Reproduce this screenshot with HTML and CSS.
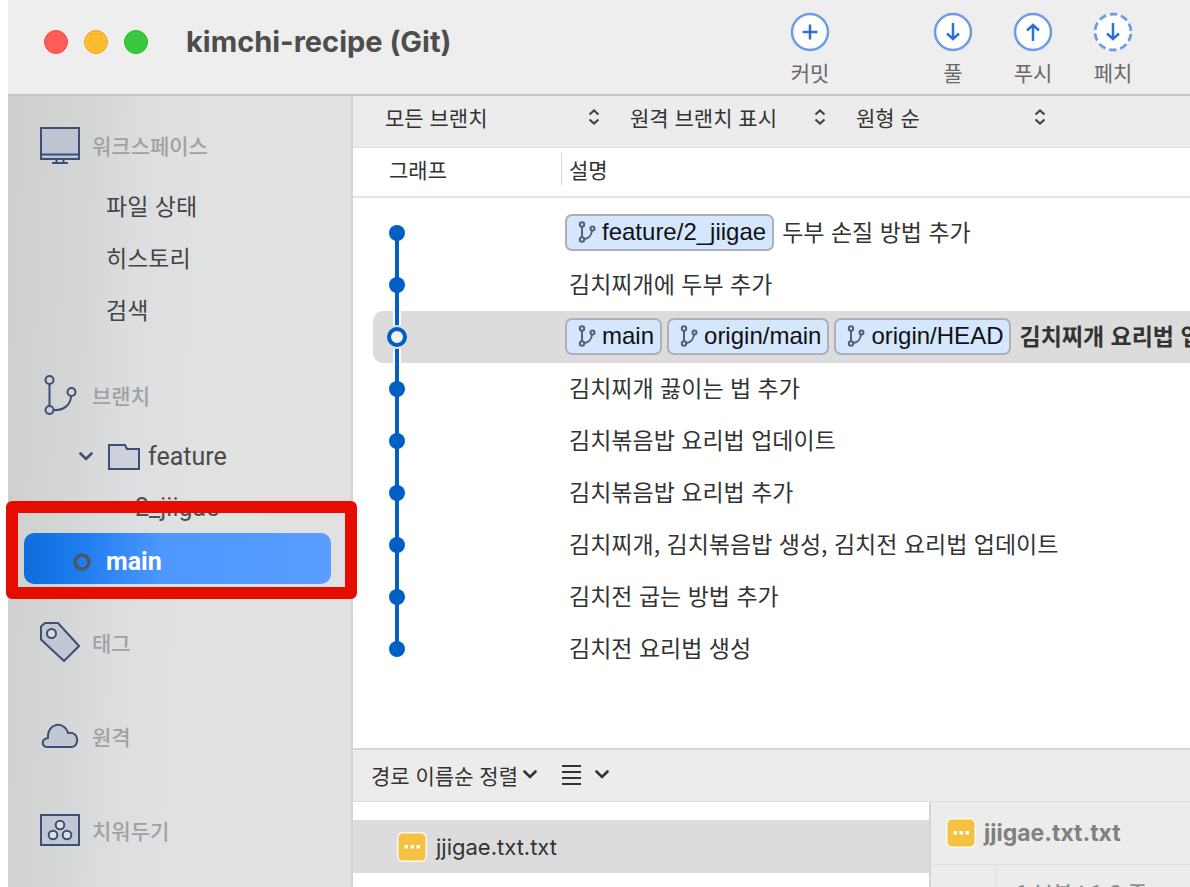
FILE: index.html
```
<!DOCTYPE html>
<html lang="ko">
<head>
<meta charset="utf-8">
<title>kimchi-recipe (Git)</title>
<link rel="stylesheet" href="styles.css">
</head>
<body>
<svg class="defs" aria-hidden="true">
  <symbol id="branch" viewBox="0 0 18 22">
    <g fill="none" stroke="currentColor" stroke-width="2">
      <circle cx="4" cy="3.500" r="2.200"/><circle cx="4" cy="18.500" r="2.200"/><circle cx="14.500" cy="7.500" r="2"/>
      <path d="M4 6v10M6.500 18c4-.5 7-4 7.500-8.500"/>
    </g>
  </symbol>
  <symbol id="updown" viewBox="0 0 12 16">
    <path d="M1.500 5.500 6 1.500l4.500 4M1.500 10.500l4.500 4 4.500-4" fill="none" stroke="#444" stroke-width="2.200"/>
  </symbol>
  <symbol id="chevron" viewBox="0 0 14 9">
    <path d="m1.500 1.500 5.500 5.500 5.500-5.500" fill="none" stroke="currentColor" stroke-width="2.600" stroke-linecap="round"/>
  </symbol>
  <symbol id="modified" viewBox="0 0 32 32">
    <rect x="1" y="1" width="30" height="30" rx="6" fill="#fafafa"/>
    <rect x="2.500" y="2.500" width="27" height="27" rx="4.500" fill="#f6c141"/>
    <path d="M8.500 14h3.500v3.500H8.500zM14.500 14H18v3.500h-3.500zM20.500 14H24v3.500h-3.500z" fill="#fff"/>
  </symbol>
  <symbol id="node" viewBox="0 0 24 52">
    <circle cx="12" cy="26" r="8" fill="#005fc5"/>
  </symbol>
</svg>

<div class="window">
  <header class="titlebar">
    <div class="lights">
      <button class="light close" aria-label="닫기"></button>
      <button class="light minimize" aria-label="최소화"></button>
      <button class="light zoom" aria-label="확대"></button>
    </div>
    <h1 class="title">kimchi-recipe (Git)</h1>
    <div class="actions">
      <button class="action commit">
        <svg width="40" height="40" viewBox="0 0 40 40"><circle cx="20" cy="20" r="18" fill="#fff" stroke="#6f9ce6" stroke-width="2.500"/><path d="M12.500 20h15M20 12.500v15" stroke="#2f70d8" stroke-width="2.500"/></svg>
        <span>커밋</span>
      </button>
      <button class="action">
        <svg width="40" height="40" viewBox="0 0 40 40"><circle cx="20" cy="20" r="18" fill="#fff" stroke="#6f9ce6" stroke-width="2.500"/><path d="M20 11v16M14 21.500l6 5.500 6-5.500" fill="none" stroke="#2f70d8" stroke-width="2.500"/></svg>
        <span>풀</span>
      </button>
      <button class="action">
        <svg width="40" height="40" viewBox="0 0 40 40"><circle cx="20" cy="20" r="18" fill="#fff" stroke="#6f9ce6" stroke-width="2.500"/><path d="M20 29V13M14 18.500l6-5.500 6 5.500" fill="none" stroke="#2f70d8" stroke-width="2.500"/></svg>
        <span>푸시</span>
      </button>
      <button class="action">
        <svg width="40" height="40" viewBox="0 0 40 40"><circle cx="20" cy="20" r="18" fill="#fff" stroke="#6f9ce6" stroke-width="2.800" stroke-dasharray="7.500 3.810" stroke-dashoffset="-1.900"/><path d="M20 11v16M14 21.500l6 5.500 6-5.500" fill="none" stroke="#2f70d8" stroke-width="2.500"/></svg>
        <span>페치</span>
      </button>
    </div>
  </header>

  <div class="body">
    <nav class="sidebar">
      <section class="group">
        <h2 class="group-title">
          <svg class="group-icon" width="40" height="40" viewBox="0 0 40 40"><path d="M1 3h38v31H1z" fill="#bfc4d1" stroke="#3d4f76" stroke-width="2"/><path d="M1 29.500h38M16.500 34v3M23.500 34v3M12 38h16" stroke="#3d4f76" stroke-width="2"/></svg>
          워크스페이스
        </h2>
        <ul class="links">
          <li><a class="link" href="#status">파일 상태</a></li>
          <li><a class="link" href="#history">히스토리</a></li>
          <li><a class="link" href="#search">검색</a></li>
        </ul>
      </section>
      <section class="group">
        <h2 class="group-title">
          <svg class="group-icon" width="40" height="40" viewBox="0 0 40 40"><g fill="none" stroke="#3d4f76" stroke-width="2"><circle cx="9.500" cy="5" r="4"/><circle cx="9.500" cy="35" r="4"/><circle cx="31.500" cy="17" r="4"/><path d="M9.500 9v22M13.500 35C24 36 31 29 31 21"/></g></svg>
          브랜치
        </h2>
        <ul class="tree">
          <li><a class="branch folder" href="#feature">
            <svg class="caret" width="14" height="9"><use href="#chevron"/></svg>
            <svg class="folder-icon" width="32" height="26" viewBox="0 0 32 26"><path d="M1 1h16l2 4h12v20H1z" fill="#cdd1dd" stroke="#3d4f76" stroke-width="2"/></svg>
            feature</a></li>
          <li><a class="branch child" href="#jiigae">2_jiigae</a></li>
          <li class="current"><a class="branch selected" href="#main">
            <svg width="18" height="18" viewBox="0 0 18 18"><circle cx="9" cy="9" r="7" fill="none" stroke="#4e5664" stroke-width="3.500"/></svg>
            main</a>
            <span class="marker"></span></li>
        </ul>
      </section>
      <section class="group">
        <h2 class="group-title">
          <svg class="group-icon" width="40" height="40" viewBox="0 0 40 40"><path d="M1 4.500 5 1h13l21 23-15 15L1 17.500z" fill="#c3c7d3" stroke="#3d4f76" stroke-width="2"/><circle cx="11.500" cy="11.500" r="4.500" fill="#dcdcdc" stroke="#3d4f76" stroke-width="2"/></svg>
          태그
        </h2>
      </section>
      <section class="group">
        <h2 class="group-title">
          <svg class="group-icon" width="40" height="40" viewBox="0 0 40 40"><path d="M8 31C1 31 1 23 8 22C7 6 25 5 28 17C40 15 39 31 32 31z" fill="#c3c7d3" stroke="#3d4f76" stroke-width="2"/></svg>
          원격
        </h2>
      </section>
      <section class="group">
        <h2 class="group-title">
          <svg class="group-icon" width="40" height="40" viewBox="0 0 40 40"><g stroke="#3d4f76" stroke-width="2"><path d="M1 5h38v30H1z" fill="#c3c7d3"/><g fill="#dde1e6"><circle cx="20" cy="15" r="4.300"/><circle cx="13" cy="25" r="4.300"/><circle cx="27" cy="25" r="4.300"/></g></g></svg>
          치워두기
        </h2>
      </section>
    </nav>

    <main class="main">
      <div class="filters">
        <label class="picker all"><select aria-label="브랜치 범위"><option>모든 브랜치</option></select><svg width="12" height="16"><use href="#updown"/></svg></label>
        <label class="picker remote"><select aria-label="원격 브랜치"><option>원격 브랜치 표시</option></select><svg width="12" height="16"><use href="#updown"/></svg></label>
        <label class="picker order"><select aria-label="정렬 순서"><option>원형 순</option></select><svg width="12" height="16"><use href="#updown"/></svg></label>
      </div>

      <div class="history">
        <table class="commits">
          <thead>
            <tr><th class="col-graph" scope="col">그래프</th><th scope="col"><span class="col-label">설명</span></th></tr>
          </thead>
          <tbody>
            <tr><td><div class="graph first"><svg width="24" height="52"><use href="#node"/></svg></div></td>
              <td><div class="desc tagged"><span class="ref"><svg width="18" height="22"><use href="#branch"/></svg>feature/2_jiigae</span><span class="message">두부 손질 방법 추가</span></div></td></tr>
            <tr><td><div class="graph"><svg width="24" height="52"><use href="#node"/></svg></div></td><td><div class="desc">김치찌개에 두부 추가</div></td></tr>
            <tr class="head"><td><div class="graph"><svg width="24" height="52" viewBox="0 0 24 52"><path d="M8 0h8v52H8z" fill="#fff"/><path d="M10 0h4v52h-4z" fill="#005fc5"/><circle cx="12" cy="26" r="12" fill="#dcdcdc"/><circle cx="12" cy="26" r="8" fill="#f3f3f3" stroke="#005fc5" stroke-width="4"/></svg></div></td>
              <td><div class="desc tagged"><span class="ref"><svg width="18" height="22"><use href="#branch"/></svg>main</span><span class="ref"><svg width="18" height="22"><use href="#branch"/></svg>origin/main</span><span class="ref"><svg width="18" height="22"><use href="#branch"/></svg>origin/HEAD</span><span class="message">김치찌개 요리법 업데이트</span></div></td></tr>
            <tr><td><div class="graph"><svg width="24" height="52"><use href="#node"/></svg></div></td><td><div class="desc">김치찌개 끓이는 법 추가</div></td></tr>
            <tr><td><div class="graph"><svg width="24" height="52"><use href="#node"/></svg></div></td><td><div class="desc">김치볶음밥 요리법 업데이트</div></td></tr>
            <tr><td><div class="graph"><svg width="24" height="52"><use href="#node"/></svg></div></td><td><div class="desc">김치볶음밥 요리법 추가</div></td></tr>
            <tr><td><div class="graph"><svg width="24" height="52"><use href="#node"/></svg></div></td><td><div class="desc">김치찌개, 김치볶음밥 생성, 김치전 요리법 업데이트</div></td></tr>
            <tr><td><div class="graph"><svg width="24" height="52"><use href="#node"/></svg></div></td><td><div class="desc">김치전 굽는 방법 추가</div></td></tr>
            <tr><td><div class="graph last"><svg width="24" height="52"><use href="#node"/></svg></div></td><td><div class="desc">김치전 요리법 생성</div></td></tr>
          </tbody>
        </table>
      </div>

      <section class="details">
        <div class="sortbar">
          <label class="sort"><select aria-label="파일 정렬"><option>경로 이름순 정렬</option></select><svg width="14" height="9"><use href="#chevron"/></svg></label>
          <button class="view" aria-label="보기 방식">
            <svg width="19" height="22" viewBox="0 0 19 22"><path d="M0 2h19M0 8h19M0 14h19M0 20h19" stroke="#333" stroke-width="2"/></svg>
            <svg width="14" height="9"><use href="#chevron"/></svg>
          </button>
        </div>
        <div class="split">
          <div class="files">
            <a class="file" href="#file"><svg width="32" height="32"><use href="#modified"/></svg>jjigae.txt.txt</a>
          </div>
          <div class="diff">
            <h3 class="diff-title"><svg width="32" height="32"><use href="#modified"/></svg>jjigae.txt.txt</h3>
            <div class="hunk"><span class="gutter"></span><span class="hunk-label">1 부분 : 1-3 줄</span></div>
          </div>
        </div>
      </section>
    </main>
  </div>
</div>
</body>
</html>
```

FILE: styles.css
```
* { box-sizing: border-box; }

body {
  margin: 0;
  background: #fff;
  color: #333;
  font-family: "Noto Sans CJK KR", sans-serif;
  font-size: 23px;
  line-height: 32px;
}

h1, h2, h3, ul { margin: 0; padding: 0; }
ul { list-style: none; }
a { color: inherit; text-decoration: none; }
svg { display: block; flex: none; }
button, select {
  appearance: none;
  margin: 0;
  padding: 0;
  border: 0;
  background: none;
  color: inherit;
  font: inherit;
}
.defs { position: absolute; width: 0; height: 0; }

.window {
  display: flex;
  flex-direction: column;
  height: 100vh;
  padding-left: 8px;
  overflow: hidden;
}

/* Title bar */
.titlebar {
  display: flex;
  flex: none;
  align-items: flex-start;
  height: 96px;
  padding: 12px 37px 0 36px;
  border-bottom: 2px solid #c4c4c4;
  background: #eee;
}
.lights { display: flex; gap: 16px; padding-top: 18px; }
.light { width: 24px; height: 24px; border-radius: 50%; }
.close { border: 1px solid #ee4b47; background: #ff5d57; }
.minimize { border: 1px solid #eca61f; background: #ffbb2e; }
.zoom { border: 1px solid #29b82f; background: #38c840; }
.title {
  padding: 14px 0 0 38px;
  color: #4d4d4d;
  font: 700 29px/32px Inter, sans-serif;
  white-space: nowrap;
}
.actions { display: flex; margin-left: auto; }
.action {
  display: flex;
  flex-direction: column;
  align-items: center;
  width: 80px;
  color: #6a6a6a;
  font-size: 21px;
  line-height: 32px;
}
.action span { padding-top: 4px; }
.commit { margin-right: 63px; }

.body { display: flex; flex: 1; min-height: 0; }

/* Sidebar */
.sidebar {
  flex: 0 0 345px;
  padding-top: 23px;
  border-right: 2px solid #d4d4d4;
  background: linear-gradient(93deg, #cecece 0%, #d3d4d4 18%, #dcdee0 37%, #e0e2e2 55%, #e1e1e1 75%);
}
.group { padding-bottom: 32px; }
.group-title {
  display: flex;
  align-items: center;
  gap: 12px;
  height: 52px;
  margin-bottom: 10px;
  padding-left: 32px;
  color: #a0a1a2;
  font-size: 21px;
  font-weight: 500;
}
.link {
  display: block;
  padding: 8px 0 12px 98px;
  color: #444;
}
.branch {
  display: flex;
  align-items: center;
  height: 51px;
  color: #505050;
  font: 25px/32px Roboto, sans-serif;
}
.folder { padding-left: 71px; color: #4b4b4b; }
.caret { margin-right: 15px; color: #3d4f76; }
.folder-icon { margin-right: 8px; }
.child { padding-left: 127px; }
.current { position: relative; margin: 0 20px 0 16px; }
.selected {
  gap: 15px;
  padding: 7px 0 0 49px;
  border-radius: 10px;
  background: linear-gradient(90deg, #0c6ddc 0%, #1e7cef 18%, #4d97ff 45%, #5a9eff 100%);
  color: #fff;
  font-weight: 700;
}
.marker {
  position: absolute;
  top: -32px;
  right: -26px;
  bottom: -15px;
  left: -18px;
  border: 12px solid #e60c00;
  border-radius: 6px;
  pointer-events: none;
}

/* Main column */
.main {
  display: flex;
  flex: 1;
  flex-direction: column;
  min-width: 0;
}
.filters {
  display: flex;
  flex: none;
  gap: 30px;
  height: 52px;
  padding: 5px 32px;
  border-bottom: 1px solid #dedede;
  background: #ececec;
  font-size: 21px;
}
.picker {
  display: flex;
  align-items: center;
  justify-content: space-between;
  height: 32px;
}
.picker select { flex: 1; min-width: 0; }
.all { width: 215px; }
.remote { width: 196px; }
.order { width: 190px; }

.history { flex: 1; min-height: 0; overflow: hidden; }
.commits {
  width: 100%;
  border-collapse: collapse;
  table-layout: fixed;
}
.commits th {
  height: 49px;
  padding: 0;
  border-bottom: 2px solid #e4e4e4;
  font-size: 21px;
  font-weight: 400;
  text-align: left;
}
.commits .col-graph { width: 208px; padding: 0 0 6px 36px; }
.col-label {
  display: block;
  margin-bottom: 6px;
  padding-left: 7px;
  border-left: 1px solid #d4d4d4;
}
.commits tbody::before { content: ""; display: block; height: 9px; }
.commits td { padding: 0; }
.graph {
  height: 52px;
  margin-left: 20px;
  padding-left: 12px;
  background: linear-gradient(#005fc5, #005fc5) 22px 0 / 4px 100% no-repeat;
}
.first { background-position: 22px 26px; }
.last { background-size: 4px 26px; }
.desc {
  display: flex;
  align-items: center;
  height: 52px;
  padding: 0 0 4px 8px;
  overflow: hidden;
  white-space: nowrap;
}
.tagged { gap: 5px; padding: 0 0 2px 4px; }
.message { padding: 0 0 2px 3px; }
.head { font-weight: 700; }
.head .graph { border-radius: 10px 0 0 10px; background: #dcdcdc; }
.head .desc { background: #dcdcdc; }
.ref {
  display: flex;
  flex: none;
  align-items: center;
  gap: 6px;
  height: 37px;
  padding: 0 6px 0 11px;
  border: 2px solid #adb1b7;
  border-radius: 7px;
  background: #d5e6ff;
  color: #111;
  font: 24px/32px "Liberation Sans", sans-serif;
}
.ref svg { color: #55606c; }

/* Lower panel */
.details {
  display: flex;
  flex: 0 0 139px;
  flex-direction: column;
  min-height: 0;
  overflow: hidden;
}
.sortbar {
  display: flex;
  flex: none;
  align-items: center;
  gap: 25px;
  height: 54px;
  padding: 0 18px 2px;
  border-top: 2px solid #d6d6d6;
  border-bottom: 1px solid #dedede;
  background: #ececec;
  font-size: 21px;
}
.sort, .view { display: flex; align-items: center; }
.sort { gap: 7px; }
.view { gap: 14px; }
.split { display: flex; flex: 1; min-height: 0; }
.files { flex: 1; min-width: 0; padding-top: 18px; }
.file {
  display: flex;
  align-items: center;
  gap: 8px;
  height: 53px;
  padding-left: 43px;
  background: #dcdcdc;
  font: 22px/32px Inter, sans-serif;
}
.diff {
  flex: 0 0 261px;
  border-left: 2px solid #d4d4d4;
  background: #ececec;
}
.diff-title {
  display: flex;
  align-items: center;
  gap: 7px;
  height: 63px;
  padding-left: 14px;
  border-bottom: 1px solid #e0e0e0;
  color: #808080;
  font: 700 23px/32px Inter, sans-serif;
}
.hunk { display: flex; }
.gutter { flex: 0 0 65px; border-right: 1px solid #dedede; }
.hunk-label {
  padding: 11px 0 0 20px;
  color: #909090;
  font-size: 21px;
  font-weight: 500;
}
```
